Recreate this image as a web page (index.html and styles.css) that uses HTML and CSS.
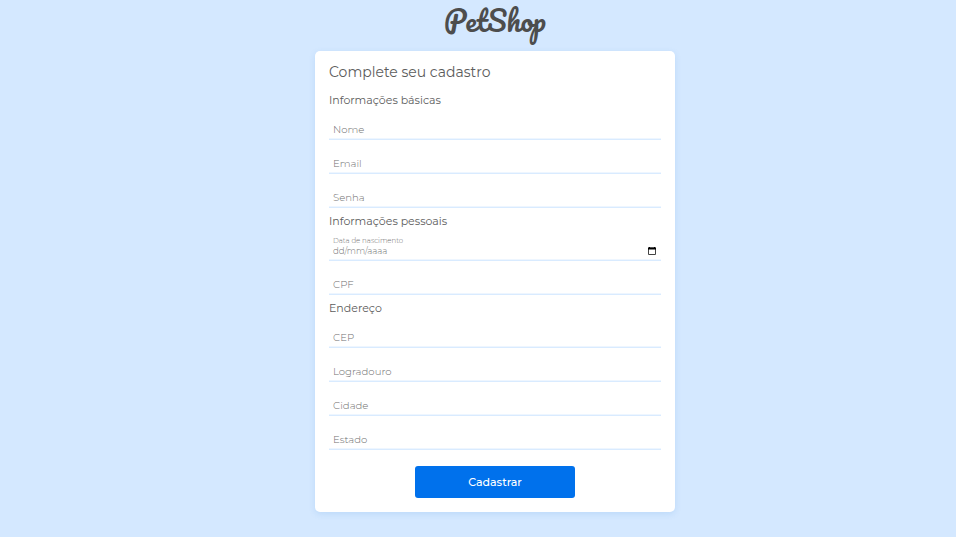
FILE: index.html
```
<!DOCTYPE html>
<html lang="pt-BR">
<head>
<meta charset="utf-8">
<title>PetShop</title>
<link rel="stylesheet" href="styles.css">
</head>
<body>
<header class="brand">PetShop</header>
<main class="card">
  <h1 class="title">Complete seu cadastro</h1>
  <form>
    <h2 class="section section-first">Informações básicas</h2>
    <div class="field"><span>Nome</span></div>
    <div class="field"><span>Email</span></div>
    <div class="field"><span>Senha</span></div>
    <h2 class="section">Informações pessoais</h2>
    <div class="field field-date">
      <div class="date-text"><span class="label">Data de nascimento</span><span class="date">dd/mm/aaaa</span></div>
      <svg class="calendar" viewBox="0 0 8 8"><path d="M.5 1h7v6.5h-7z" fill="none" stroke="#444"/><path d="M0 .5h8V2.5H0z" fill="#000"/><path d="M1.5 0v1M6.5 0v1" stroke="#000"/></svg>
    </div>
    <div class="field"><span>CPF</span></div>
    <h2 class="section">Endereço</h2>
    <div class="field"><span>CEP</span></div>
    <div class="field"><span>Logradouro</span></div>
    <div class="field"><span>Cidade</span></div>
    <div class="field"><span>Estado</span></div>
    <button class="submit" type="button">Cadastrar</button>
  </form>
</main>
</body>
</html>
```
FILE: styles.css
```
* { box-sizing: border-box; }
body {
  margin: 0;
  height: 537px;
  padding-left: 34px;
  background: #d4e8ff;
  font-family: Montserrat, Inter, sans-serif;
  color: #5c5c5c;
}
.brand {
  height: 51px;
  line-height: 42px;
  text-align: center;
  font-family: Pacifico, cursive;
  font-size: 28px;
  color: #4d4d4d;
}
.card {
  width: 360px;
  height: 461px;
  margin: 0 auto;
  padding: 12px 14px 0;
  background: #fff;
  border-radius: 5px;
  box-shadow: 0 2px 6px rgba(70, 140, 220, .16);
}
.title {
  margin: 0;
  font-size: 14px;
  line-height: 19px;
  font-weight: 400;
}
.section {
  margin: 0;
  height: 19px;
  padding-top: 5px;
  font-size: 11px;
  line-height: 16px;
  font-weight: 400;
}
.section-first { height: 24px; padding-top: 10px; }
.field {
  display: flex;
  align-items: flex-end;
  height: 34px;
  padding: 0 5px 3px 4px;
  border-bottom: 1px solid #d9ebff;
  box-shadow: inset 0 -1px #eef6ff;
  font-size: 10.15px;
  line-height: 13px;
  font-weight: 300;
  color: #707070;
}
.field-date { justify-content: space-between; }
.date-text { display: flex; flex-direction: column; }
.label { font-size: 7px; line-height: 9px; }
.date { font-size: 8.6px; line-height: 12px; }
.calendar { width: 8px; height: 8px; margin-bottom: 2px; }
.submit {
  display: block;
  width: 160px;
  height: 32px;
  margin: 16px auto 0;
  padding: 0;
  border: 0;
  border-radius: 3px;
  background: #0071ec;
  color: #fff;
  font: 500 11px/32px Montserrat, Inter, sans-serif;
}
```
